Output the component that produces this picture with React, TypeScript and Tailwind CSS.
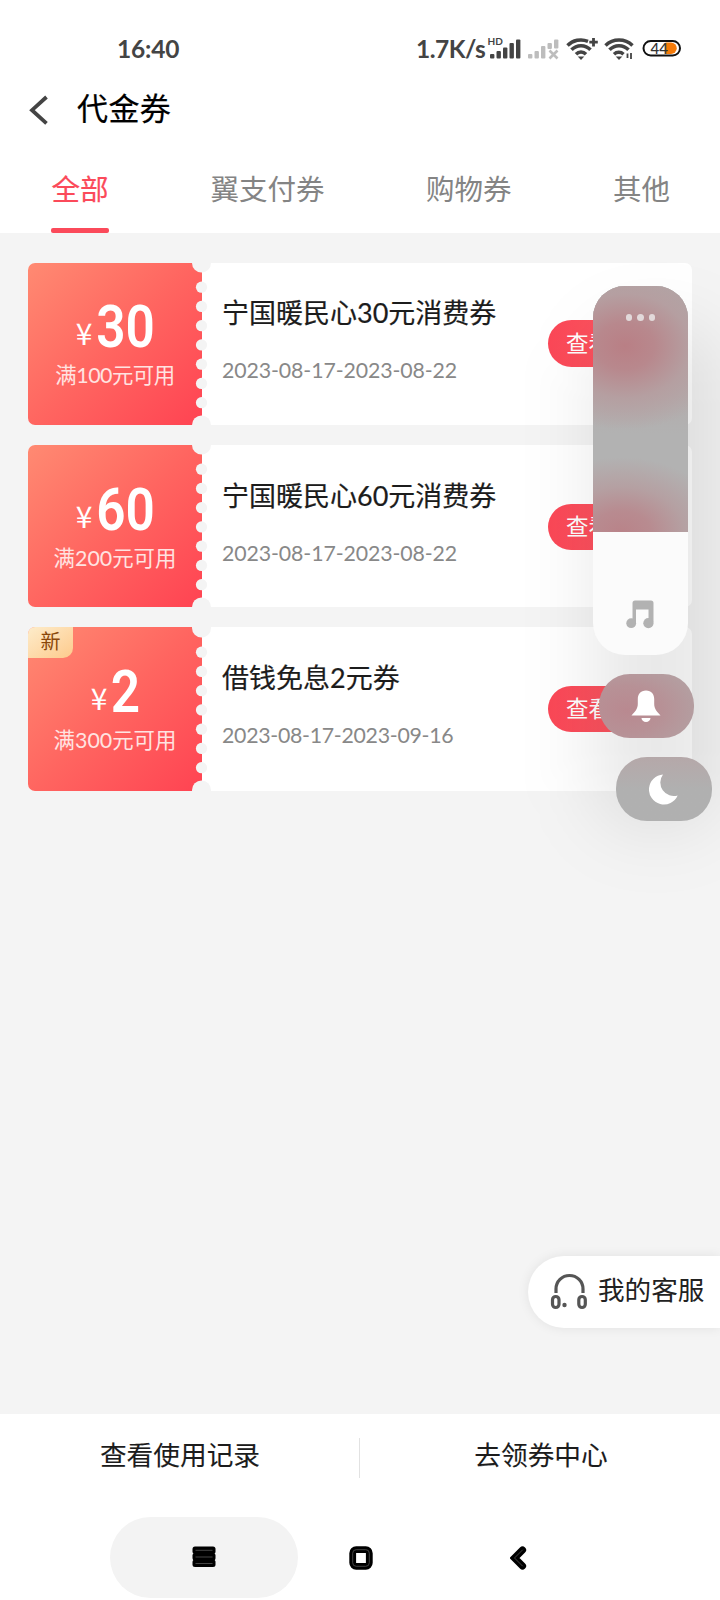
import clsx from "clsx";

const tabs = [
  { label: "全部", active: true },
  { label: "翼支付券" },
  { label: "购物券" },
  { label: "其他" },
];

const coupons = [
  {
    amount: "30",
    condition: "满100元可用",
    title: "宁国暖民心30元消费券",
    period: "2023-08-17-2023-08-22",
    size: "h-[162px] pt-px",
    button: "h-[47px] mt-[56px]",
    spacing: "tracking-[-0.5px]",
    periodSpacing: "tracking-[-0.1px]",
  },
  {
    amount: "60",
    condition: "满200元可用",
    title: "宁国暖民心60元消费券",
    period: "2023-08-17-2023-08-22",
    size: "h-[162px] pt-[2px]",
    button: "h-[46px] mt-[57px]",
    spacing: "tracking-normal",
    periodSpacing: "tracking-[-0.1px]",
  },
  {
    amount: "2",
    condition: "满300元可用",
    title: "借钱免息2元券",
    period: "2023-08-17-2023-09-16",
    size: "h-[164px] pt-[2px]",
    button: "h-[46px] mt-[57px]",
    spacing: "tracking-normal",
    periodSpacing: "tracking-[-0.28px]",
    isNew: true,
  },
];

export default function App() {
  return (
    <div className="relative flex h-[1600px] w-[720px] flex-col overflow-hidden bg-[#f4f4f4] font-[Lato,'Noto_Sans_CJK_SC',sans-serif] text-[#222]">
      <header className="h-[233px] bg-white">
        <StatusBar />
        <div className="flex h-[56px] items-center pl-[28px]">
          <svg width="20" height="30" viewBox="0 0 20 30" className="mt-1" fill="none">
            <path d="M18.5 2L4 15.2L18.5 28.4" stroke="#444" strokeWidth="3.8" />
          </svg>
          <h1 className="ml-[29px] text-[31px] leading-none tracking-[0.4px] text-black [-webkit-text-stroke:0.2px]">
            代金券
          </h1>
        </div>
        <nav className="flex h-[97px] justify-between pt-[23px] pr-[50px] pl-[51px]">
          {tabs.map((tab) => (
            <Tab key={tab.label} {...tab} />
          ))}
        </nav>
      </header>

      <main className="flex flex-1 flex-col gap-5 px-7 pt-[30px]">
        {coupons.map((coupon) => (
          <Coupon key={coupon.amount} {...coupon} />
        ))}
      </main>

      <footer className="h-[186px] bg-white">
        <div className="flex h-[86px] items-center text-[26.7px] text-[#1c1c1c] [-webkit-text-stroke:0.1px]">
          <div className="flex-1 pb-[4px] pl-px text-center">查看使用记录</div>
          <div className="mt-[2px] h-10 w-px bg-[#e2e2e2]" />
          <div className="flex-1 pb-[4px] pl-[2px] text-center">去领券中心</div>
        </div>
        <SystemNav />
      </footer>

      <FloatingControls />
      <ServiceButton />
    </div>
  );
}

function StatusBar() {
  return (
    <div className="flex h-[80px] items-center pt-[18px] pl-[117px] text-[24.5px] font-bold text-[#444]">
      <div className="w-[299px] tracking-[-0.2px]">16:40</div>
      <div className="w-[71px] tracking-[-0.5px]">1.7K/s</div>
      <svg width="200" height="36" viewBox="0 0 200 36" className="mt-[-1px]">
        <text x="0.5" y="14" fontSize="10" fontWeight="700" fill="#444">
          HD
        </text>
        <g fill="#444">
          <rect x="3" y="23" width="4.4" height="4.5" rx="1" />
          <rect x="9.5" y="20" width="4.4" height="7.5" rx="1" />
          <rect x="16" y="16.5" width="4.4" height="11" rx="1" />
          <rect x="22.5" y="12" width="4.4" height="15.5" rx="1" />
          <rect x="29" y="8.5" width="4.4" height="19" rx="1" />
        </g>
        <g fill="#bdbdbd">
          <rect x="41" y="23" width="4.4" height="4.5" rx="1" />
          <rect x="47.5" y="20" width="4.4" height="7.5" rx="1" />
          <rect x="54" y="15" width="4.4" height="12.5" rx="1" />
          <rect x="60.5" y="12" width="4.4" height="6" rx="1" />
          <rect x="67" y="8.5" width="4.4" height="9" rx="1" />
          <path d="M62.5 19.5L70.5 27.5M70.5 19.5L62.5 27.5" stroke="#bdbdbd" strokeWidth="2.6" />
        </g>
        <g fill="none" stroke="#444" strokeWidth="3.5">
          <path d="M80.5 14.5a19 19 0 0 1 20.5-4.2M84.5 18.8a13 13 0 0 1 19 0M89 23.2a7 7 0 0 1 10 0" />
          <path d="M106.5 7v8.5M102.3 11.2h8.5" strokeWidth="2.8" />
          <path d="M118.5 14.5a19.5 19.5 0 0 1 27 0M122.5 18.8a13 13 0 0 1 19 0M127 23.2a7 7 0 0 1 9.5 0" />
          <path d="M140.5 22.5v4.5M144 22v6" strokeWidth="1.8" />
        </g>
        <path d="M90.7 25.5h6.6L94 29z" fill="#444" />
        <path d="M128.7 25.5h6.6L132 29z" fill="#444" />
        <rect x="156.5" y="10" width="36.5" height="14.5" rx="7.25" fill="#fff" stroke="#111" strokeWidth="2" />
        <path d="M178.5 11.5h5.5a5.7 5.7 0 0 1 0 11.5h-5.5z" fill="#f57a08" />
        <text x="163.5" y="22.8" fontSize="15" fontWeight="500" fill="#333">
          44
        </text>
      </svg>
    </div>
  );
}

function Tab({ label, active }: { label: string; active?: boolean }) {
  return (
    <div
      className={clsx(
        "flex flex-col items-center justify-between text-[28.5px]",
        active ? "text-[#fb4a5a] [-webkit-text-stroke:0.2px]" : "text-[#848484]",
      )}
    >
      <span className="leading-[60px]">{label}</span>
      {active && <span className="h-[5px] w-[58px] rounded-[2px] bg-[#fb4a5a]" />}
    </div>
  );
}

type CouponProps = (typeof coupons)[number];

function Coupon({
  amount,
  condition,
  title,
  period,
  size,
  button,
  spacing,
  periodSpacing,
  isNew,
}: CouponProps) {
  return (
    <div className={clsx("relative flex overflow-hidden rounded-[7px] bg-white", size)}>
      <div className="absolute inset-y-0 left-0 w-[174px] bg-linear-[135deg,#ff8a72_0%,#ff6560_50%,#ff4352_100%]" />
      <Perforation />
      {isNew && (
        <span className="absolute top-0 left-0 h-[31px] w-[45px] rounded-br-[10px] bg-linear-to-br from-[#fdecca] to-[#fdca8c] text-center text-[20px] leading-[28px] text-[#8a4709]">
          新
        </span>
      )}
      <div className="relative flex w-[174px] flex-col items-center text-white">
        <div className="flex h-[92px] items-end justify-center gap-[5px]">
          <span className="mb-[6px] font-['Noto_Sans_CJK_SC'] text-[30px] leading-[36px]">¥</span>
          <Amount value={amount} />
        </div>
        <div
          className={clsx(
            "mt-[4px] text-[21.4px] leading-[30px] whitespace-nowrap text-[#ffe3e1]",
            spacing,
          )}
        >
          {condition}
        </div>
      </div>
      <div className="w-[346px] pl-[20px]">
        <div className="mt-[30px] text-[27px] leading-[38px] text-[#1c1c1c] [-webkit-text-stroke:0.2px]">
          {title}
        </div>
        <div
          className={clsx("mt-[24px] text-[21.3px] leading-[28px] text-[#888]", periodSpacing)}
        >
          {period}
        </div>
      </div>
      <button
        className={clsx(
          "flex w-[126px] items-center justify-center rounded-full bg-linear-to-r from-[#fb4757] to-[#ff6068] text-[22.5px] text-white",
          button,
        )}
      >
        查看券码
      </button>
    </div>
  );
}

// The digits are narrower than the normal face, so they are squeezed
function Amount({ value }: { value: string }) {
  return (
    <span
      className={clsx(
        "inline-block text-center font-[Roboto] text-[59px] leading-[59px] font-semibold",
        value.length > 1 ? "w-[57px]" : "w-[27px]",
      )}
    >
      <span className="-mx-4 block scale-x-[0.87]">{value}</span>
    </span>
  );
}

function Perforation() {
  return (
    <svg className="absolute inset-y-0 left-[162px] h-full w-6" viewBox="0 0 24 162" fill="#f4f4f4">
      <circle cx="11.5" cy="0" r="9.5" />
      {[...Array(7)].map((_, ndx) => (
        <circle key={ndx} cx="11.5" cy={24.2 + ndx * 19.25} r="5.6" />
      ))}
      <circle cx="11.5" cy="162" r="9.5" />
    </svg>
  );
}

function FloatingControls() {
  return (
    <div className="absolute top-[286px] left-[593px] h-[535px] w-[119px]">
      <div className="absolute top-[40px] -right-2 -bottom-2 left-0 rounded-[50px] bg-black/9 blur-[36px]" />
      <div className="relative flex h-[369px] w-[95px] flex-col overflow-hidden rounded-[32px] bg-[#fbfbfb]">
        <div className="flex h-[246px] justify-center gap-[5px] bg-[#b2b2b2] bg-[radial-gradient(ellipse_105px_84px_at_32px_60px,#b97f85_0%,#b8888d_28%,#b59fa1_62%,#b2b2b200_100%),radial-gradient(ellipse_105px_75px_at_28px_246px,#b98389_0%,#b88b90_28%,#b5a0a2_60%,#b2b2b200_100%),linear-gradient(#b0a6a6,#b2acac_45%,#b2b2b2_60%)] pt-[28px]">
          <span className="h-[6.5px] w-[6.5px] rounded-full bg-[#e2d9da]" />
          <span className="h-[6.5px] w-[6.5px] rounded-full bg-[#e2d9da]" />
          <span className="h-[6.5px] w-[6.5px] rounded-full bg-[#e2d9da]" />
        </div>
        <svg width="28" height="29" viewBox="0 0 28 29" className="mt-[68px] ml-[33px]" fill="#b2b2b2">
          <path d="M6.5 3Q6.5 0.5 9 0.5H25Q27.5 0.5 27.5 3V22.5H22.5V9.5H10V23H6.5z" />
          <circle cx="5.2" cy="23.2" r="4.9" />
          <circle cx="22.4" cy="23.2" r="5.1" />
        </svg>
      </div>
      <div className="relative mt-[19px] ml-[6px] flex h-[64px] w-[95px] items-center justify-center rounded-[31px] bg-[#b2a6a7] bg-[radial-gradient(ellipse_90px_60px_at_28px_36px,#b98990_0%,#b79196_40%,#b2a6a700_100%)] pr-[2px]">
        <svg width="30" height="33" viewBox="0 0 30 33" fill="#fff">
          <path d="M15 0.5C9.5 0.5 6.8 4.5 6.8 9V14C6.8 19 4 21.5 0.5 25.5H29.5C26 21.5 23.2 19 23.2 14V9C23.2 4.5 20.5 0.5 15 0.5z" />
          <path d="M10.5 28H19.5A4.5 4 0 0 1 10.5 28z" />
        </svg>
      </div>
      <div className="relative mt-[19px] ml-[23px] flex h-[64px] w-[96px] items-center justify-center rounded-[31px] bg-linear-to-b from-[#b5a8a9] to-[#b0b0b0] to-50% pr-[2px]">
        <svg width="29" height="31" viewBox="0 0 29 31" fill="#fff">
          <path d="M14 0.5A15 15 0 1 0 28.7 21.5A13.5 13.5 0 0 1 14 0.5z" />
        </svg>
      </div>
    </div>
  );
}

function ServiceButton() {
  return (
    <div className="absolute top-[1256px] right-0 flex h-[72px] w-[192px] items-center rounded-l-full bg-white pb-[2px] pl-[22px] shadow-[0_0_12px_rgba(0,0,0,0.08)]">
      <svg width="38" height="38" viewBox="0 0 38 38" className="mt-[2px]" fill="none" stroke="#555" strokeWidth="3.2">
        <path d="M6 20V16a13.5 13.5 0 0 1 27 0V20" />
        <rect x="2.5" y="23.5" width="6.5" height="11" rx="3.2" />
        <rect x="28.8" y="23.5" width="6.5" height="11" rx="3.2" />
        <circle cx="14.5" cy="32" r="2.2" fill="#555" stroke="none" />
      </svg>
      <span className="ml-[10px] text-[26.6px] whitespace-nowrap">我的客服</span>
    </div>
  );
}

function SystemNav() {
  return (
    <div className="flex items-center pt-[17px] pl-[110px]">
      <div className="flex h-[81px] w-[188px] items-center justify-center rounded-full bg-[#f3f3f3]">
        <svg width="24" height="22" viewBox="0 0 24 22" className="-mt-px">
          <rect x="0.5" y="0.5" width="23" height="7.5" rx="2.5" />
          <rect x="0.5" y="7" width="23" height="7.5" rx="2.5" />
          <rect x="0.5" y="13.5" width="23" height="7.5" rx="2.5" />
          <path d="M3.5 4.3h17M3.5 11h17M3.5 17.5h17" stroke="#444" strokeWidth="1" />
        </svg>
      </div>
      <svg width="24" height="24" viewBox="0 0 24 24" className="ml-[51px]" fill="none">
        <rect x="3.7" y="3.7" width="16.6" height="16.6" rx="3.5" stroke="#000" strokeWidth="6.8" />
        <rect x="3.7" y="3.7" width="16.6" height="16.6" rx="3.5" stroke="#444" strokeWidth="1" />
      </svg>
      <svg width="17" height="24" viewBox="0 0 17 24" className="ml-[137px]" fill="none" strokeLinecap="round">
        <path d="M12.5 4L4.5 12L12.5 20" stroke="#000" strokeWidth="7.2" />
        <path d="M12.5 4L4.5 12L12.5 20" stroke="#444" strokeWidth="1" />
      </svg>
    </div>
  );
}
